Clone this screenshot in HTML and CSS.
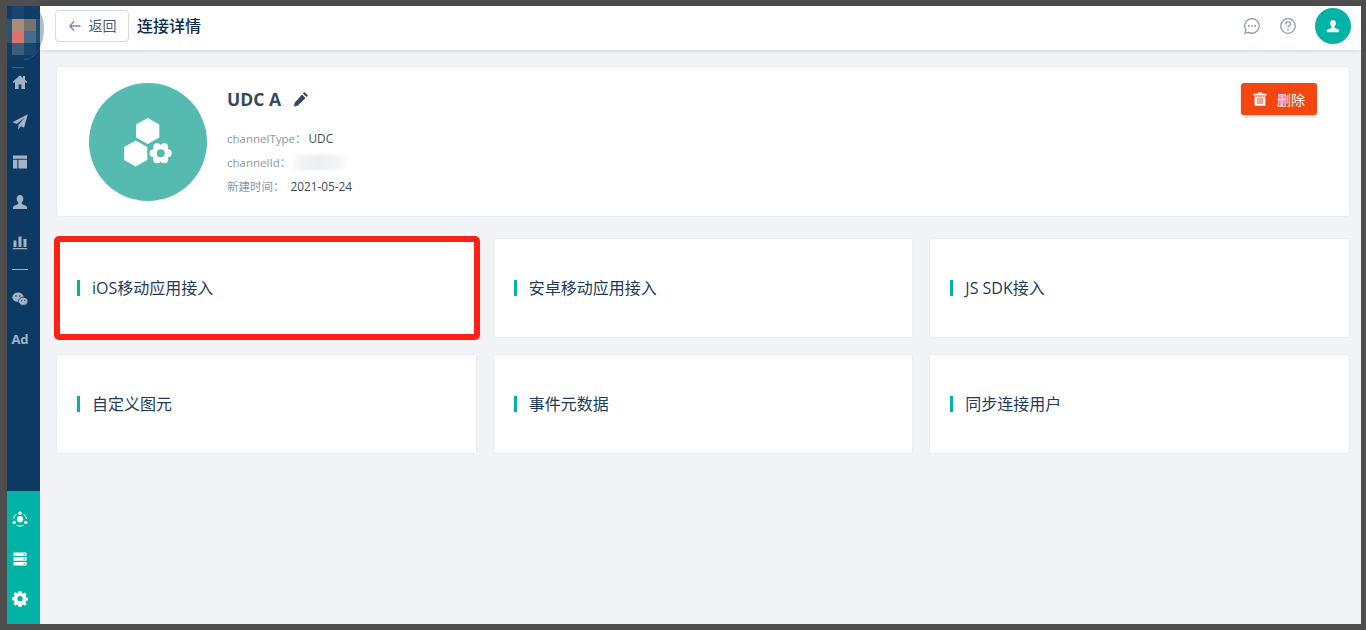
FILE: index.html
```html
<!DOCTYPE html>
<html lang="zh">
<head>
<meta charset="utf-8">
<title>连接详情</title>
<link rel="stylesheet" href="styles.css">
</head>
<body>
<div class="app">
  <aside class="sidebar">
    <div class="side-top">
      <div class="logo">
        <div class="mosaic">
          <i class="c1"></i><i class="c2"></i><i class="c1"></i><i class="c1"></i>
          <i class="c3"></i><i class="c4"></i><i class="c5"></i><i class="c6"></i>
          <i class="c3"></i><i class="c7"></i><i class="c8"></i><i class="c6"></i>
          <i class="c1"></i><i class="c9"></i><i class="c2"></i><i class="c1"></i>
        </div>
      </div>
      <div class="rule rule-top"></div>
      <nav class="nav">
        <a class="nav-item first"><svg viewBox="0 0 16 16" class="ico"><path d="M8 1.200 0.600 8l1 1L3 7.800V15h3.600v-4.400h2.800V15H13V7.800l1.400 1.200 1-1L13 5.800V2h-2v1.900z"/></svg></a>
        <a class="nav-item"><svg viewBox="0 0 16 16" class="ico"><path d="M15.800.3.400 8.200l4.200 1.800L13 3.400 6.300 11.100v4.300l2.500-3.100 3.300 1.400z"/></svg></a>
        <a class="nav-item"><svg viewBox="0 0 16 16" class="ico"><path d="M1 1.500h14v3.200H1zM1 5.800h4.300v8.700H1zM6.400 5.800H15v8.700H6.400z"/></svg></a>
        <a class="nav-item"><svg viewBox="0 0 16 16" class="ico"><path d="M8 1c2 0 3.300 1.500 3.300 3.700 0 1.700-.8 3-1.600 3.700v1.200c0 .6 1.200 1 2.500 1.500 1.500.6 2.800 1.100 2.800 2.300V15H1v-1.600c0-1.200 1.300-1.700 2.800-2.300 1.300-.5 2.500-.9 2.500-1.500V8.400c-.8-.7-1.600-2-1.600-3.700C4.700 2.500 6 1 8 1z"/></svg></a>
        <a class="nav-item"><svg viewBox="0 0 16 16" class="ico"><path d="M1.500 6.500h3v6.500h-3zM6.500 2.500h3V13h-3zM11.500 5h3v8h-3zM.8 14h14.400v1.200H.8z"/></svg></a>
        <div class="rule rule-mid"></div>
        <a class="nav-item"><svg viewBox="0 0 16 16" class="ico"><ellipse cx="6" cy="6.200" rx="5.700" ry="4.700"/><ellipse cx="11.200" cy="10.300" rx="4.800" ry="4" stroke="#0d3a63" stroke-width=".8"/><circle cx="4" cy="5" r=".8" fill="#0d3a63"/><circle cx="7.800" cy="5" r=".8" fill="#0d3a63"/><circle cx="9.600" cy="9.600" r=".6" fill="#0d3a63"/><circle cx="12.800" cy="9.600" r=".6" fill="#0d3a63"/></svg></a>
        <a class="nav-item ad">Ad</a>
      </nav>
    </div>
    <div class="side-bottom">
      <a class="nav-item"><svg viewBox="0 0 16 16" class="ico white"><circle cx="8" cy="8.200" r="3.100"/><circle cx="8" cy="2.200" r="1.700"/><circle cx="2.200" cy="11.400" r="1.700"/><circle cx="13.800" cy="11.400" r="1.700"/><path d="M4.400 3.200A6.600 6.600 0 0 0 1.500 8M11.600 3.200A6.600 6.600 0 0 1 14.500 8M4.500 14.200a6.800 6.800 0 0 0 7 0" fill="none" stroke="#fff" stroke-width="1"/></svg></a>
      <a class="nav-item"><svg viewBox="0 0 16 16" class="ico white"><path d="M1.500 1.500h13v3.600h-13zM1.500 6.200h13v3.600h-13zM1.500 10.900h13v3.600h-13z"/><circle cx="12.200" cy="3.300" r=".8" fill="#00b3a4"/><circle cx="12.200" cy="8" r=".8" fill="#00b3a4"/><circle cx="12.200" cy="12.700" r=".8" fill="#00b3a4"/></svg></a>
      <a class="nav-item"><svg viewBox="0 0 16 16" class="ico white"><path fill-rule="evenodd" d="M6.600.5h2.800l.4 2.100 1.300.6 1.800-1.200 2 2-1.200 1.800.6 1.300 2.100.4v2.800l-2.100.4-.6 1.300 1.200 1.800-2 2-1.800-1.200-1.300.6-.4 2.100H6.600l-.4-2.100-1.300-.6-1.800 1.200-2-2 1.200-1.800-.6-1.300L-.4 9.800V7l2.100-.4.600-1.300L1.100 3.500l2-2 1.800 1.200 1.300-.6zM8 5.600a2.800 2.800 0 1 0 0 5.600 2.800 2.800 0 0 0 0-5.600z" transform="translate(.4 -.4) scale(.96)"/></svg></a>
    </div>
  </aside>
  <div class="main">
    <header class="topbar">
      <button class="back"><svg viewBox="0 0 14 14" class="back-ico"><path d="M6 2.500 1.800 7 6 11.500M2 7h10.500" fill="none" stroke="#7b8a9e" stroke-width="1.300"/></svg><span class="back-text">返回</span></button>
      <h1 class="page-title">连接详情</h1>
      <div class="top-actions">
        <svg viewBox="0 0 18 18" class="top-ico"><path d="M9 1.600a7.300 7.300 0 1 1-3.400 13.800L2 16.400l1-3.400A7.300 7.300 0 0 1 9 1.600z" fill="none" stroke="#8d9bb0" stroke-width="1.300"/><circle cx="5.800" cy="9" r="1" fill="#8d9bb0"/><circle cx="9" cy="9" r="1" fill="#8d9bb0"/><circle cx="12.200" cy="9" r="1" fill="#8d9bb0"/></svg>
        <svg viewBox="0 0 18 18" class="top-ico"><circle cx="9" cy="9" r="7.300" fill="none" stroke="#8d9bb0" stroke-width="1.300"/><path d="M6.700 7.200c0-1.400 1-2.300 2.300-2.300s2.300.9 2.300 2.100c0 1.700-2.300 1.800-2.300 3.500" fill="none" stroke="#8d9bb0" stroke-width="1.300"/><circle cx="9" cy="12.700" r=".9" fill="#8d9bb0"/></svg>
        <div class="avatar"><svg viewBox="0 0 16 16" class="avatar-ico"><path d="M8 1c2 0 3.300 1.500 3.300 3.700 0 1.700-.8 3-1.600 3.700v1.200c0 .6 1.200 1 2.500 1.500 1.500.6 2.800 1.100 2.800 2.300V15H1v-1.600c0-1.200 1.300-1.700 2.800-2.300 1.300-.5 2.500-.9 2.500-1.500V8.400c-.8-.7-1.600-2-1.600-3.700C4.700 2.500 6 1 8 1z" fill="#fff"/></svg></div>
      </div>
    </header>
    <main class="content">
      <section class="info-card">
        <div class="hero"><svg viewBox="0 0 118 118" class="hero-ico"><path d="M58.700 35 70.300 41.500v13L58.700 61 47.100 54.500v-13z" fill="#fff"/><path d="M46.700 57.500 58.300 64v13L46.700 83.500 35.100 77V64z" fill="#fff"/><g fill="#fff"><circle cx="71.700" cy="70.300" r="8"/><circle cx="78.700" cy="70.300" r="4"/><circle cx="64.700" cy="70.300" r="4"/><circle cx="75.200" cy="64.300" r="4"/><circle cx="68.200" cy="64.300" r="4"/><circle cx="75.200" cy="76.300" r="4"/><circle cx="68.200" cy="76.300" r="4"/></g><circle cx="71.700" cy="70.300" r="4" fill="#55bbb1"/></svg></div>
        <div class="info">
          <div class="name-row"><span class="name">UDC A</span><svg viewBox="0 0 16 16" class="edit"><path d="M11.500 1 15 4.500l-1.600 1.600L9.900 2.600zM9 3.500 12.500 7l-7.800 7.800-3.700.7.700-3.700z" fill="#34495e"/></svg></div>
          <div class="meta"><span class="label tight">channelType：</span><span class="val">UDC</span></div>
          <div class="meta"><span class="label">channelId：</span><span class="smudge"></span></div>
          <div class="meta"><span class="label">新建时间：</span><span class="val">2021-05-24</span></div>
        </div>
        <button class="del"><svg viewBox="0 0 14 14" class="del-ico"><path fill="#fff" fill-rule="evenodd" d="M5 .4h4l.6 1.300H13.500v1.900H.5V1.700h3.900zM1.600 4.500h10.800V13.800H1.600zM4.200 6.200v5.800h5.600V6.200z"/><path fill="#f9a78c" d="M4.200 6.200h5.600v5.800H4.200z"/></svg><span>删除</span></button>
      </section>
      <section class="grid">
        <a class="tile marked"><span class="tile-label">iOS移动应用接入</span></a>
        <a class="tile"><span class="tile-label">安卓移动应用接入</span></a>
        <a class="tile"><span class="tile-label">JS SDK接入</span></a>
        <a class="tile"><span class="tile-label">自定义图元</span></a>
        <a class="tile"><span class="tile-label">事件元数据</span></a>
        <a class="tile"><span class="tile-label">同步连接用户</span></a>
      </section>
    </main>
  </div>
</div>
</body>
</html>
```
FILE: styles.css
```css
* { box-sizing: border-box; }
html, body { margin: 0; height: 100%; overflow: hidden; }
body {
  font-family: "Open Sans", "Noto Sans CJK SC", sans-serif;
  background: #4d4d4d;
}
a { display: block; }
.app {
  display: flex;
  height: 630px;
  padding: 6px 5px 6px 7px;
  background: #4d4d4d;
}
.sidebar {
  position: relative;
  z-index: 3;
  flex: 0 0 33px;
  display: flex;
  flex-direction: column;
  justify-content: space-between;
  background: #0d3a63;
}
.logo {
  position: absolute;
  top: 0;
  left: 0;
  width: 37px;
  height: 54px;
  border-radius: 0 14px 22px 0 / 0 24px 34px 0;
  overflow: hidden;
  background: #aebccb;
}
.mosaic {
  width: 33px;
  height: 100%;
  display: grid;
  grid-template-columns: 5px 12px 12px 4px;
  grid-template-rows: 13px 12px 12px 12px;
  border-radius: 0 0 12px 0;
  overflow: hidden;
  background: #0f3d66;
}
.mosaic i { display: block; }
.c1 { background: #0f3d66; }
.c2 { background: #18466f; }
.c3 { background: #24587b; }
.c4 { background: #b08a78; }
.c5 { background: #77726f; }
.c6 { background: #1f4f73; }
.c7 { background: #dc7270; }
.c8 { background: #436d8a; }
.c9 { background: #3d5d7a; }
.rule { height: 1px; }
.rule-top { margin: 61px 16px 0 5px; background: #3a5f82; }
.rule-mid { margin: 7px 12px 9px 5px; background: #9fb0c2; }
.nav-item {
  display: flex;
  align-items: center;
  justify-content: center;
  height: 40px;
  padding-right: 7px;
}
.nav-item.first { margin-top: -6px; }
.ico { width: 16px; height: 16px; fill: #a3b3c4; }
.ico.white { fill: #fff; }
.ad { font-size: 13px; font-weight: 700; color: #a3b3c4; font-family: "Open Sans", sans-serif; }
.side-bottom {
  background: #00b3a4;
  height: 133px;
  padding-top: 8px;
}
.main {
  flex: 1;
  min-width: 0;
  display: flex;
  flex-direction: column;
  background: #f1f3f7;
}
.topbar {
  flex: 0 0 44px;
  display: flex;
  align-items: center;
  padding: 0 10px 4px 15px;
  background: #fff;
  box-shadow: 0 1px 4px rgba(30, 50, 80, .15);
  position: relative;
  z-index: 1;
}
.back {
  display: flex;
  align-items: center;
  justify-content: center;
  gap: 7px;
  width: 74px;
  height: 32px;
  padding: 0;
  background: #fff;
  border: 1px solid #d5dbe3;
  border-radius: 4px;
  color: #4a5b70;
  font: 14px "Open Sans", "Noto Sans CJK SC", sans-serif;
}
.back-text { padding-bottom: 2px; }
.back-ico { width: 14px; height: 14px; }
.page-title {
  margin: 0 0 0 8px;
  padding-bottom: 2px;
  font-size: 16px;
  font-weight: 500;
  color: #0d2b4e;
}
.top-actions { margin-left: auto; display: flex; align-items: center; }
.top-ico { width: 18px; height: 18px; margin-right: 18px; }
.avatar {
  width: 36px;
  height: 36px;
  border-radius: 50%;
  background: #00b3a4;
  display: flex;
  align-items: center;
  justify-content: center;
}
.avatar-ico { width: 14px; height: 14px; }
.content { padding: 16px 11px 0 16px; }
.info-card {
  height: 151px;
  padding: 16px 32px;
  display: flex;
  align-items: flex-start;
  background: #fff;
  border: 1px solid #e9ecf1;
  border-radius: 3px;
}
.hero {
  flex: 0 0 118px;
  height: 118px;
  border-radius: 50%;
  background: #55bbb1;
}
.hero-ico { width: 118px; height: 118px; display: block; }
.info { margin-left: 20px; }
.name-row { display: flex; align-items: center; height: 32px; }
.name { font-size: 17.5px; font-weight: 700; color: #34495e; }
.edit { width: 16px; height: 16px; margin-left: 12px; }
.meta {
  display: flex;
  align-items: center;
  height: 24px;
  font-size: 11.5px;
  color: #8a97a8;
}
.name-row + .meta { margin-top: 11px; }
.label { margin-right: 6px; }
.label.tight { margin-right: 2px; }
.val { color: #3b4c60; font-size: 11.8px; }
.smudge {
  width: 56px;
  height: 15px;
  margin-left: -4px;
  border-radius: 4px;
  background: linear-gradient(90deg, #fafafb, #f0f1f3 20%, #eceef1 45%, #f2f3f5 75%, #fff);
  filter: blur(1.5px);
}
.del {
  margin-left: auto;
  width: 76px;
  height: 32px;
  display: flex;
  align-items: center;
  justify-content: center;
  gap: 10px;
  padding: 0;
  background: #f34610;
  border: 0;
  border-radius: 3px;
  color: #fff;
  font: 14px "Open Sans", "Noto Sans CJK SC", sans-serif;
  box-shadow: 0 1px 2px rgba(243, 70, 16, .4);
}
.del-ico { width: 14px; height: 14px; }
.grid {
  margin-top: 21px;
  display: grid;
  grid-template-columns: repeat(3, 1fr);
  grid-auto-rows: 100px;
  gap: 16px;
}
.tile {
  position: relative;
  display: flex;
  align-items: center;
  padding-left: 20px;
  background: #fff;
  border: 1px solid #e9ecf1;
  border-radius: 2px;
}
.tile-label {
  padding-left: 12px;
  border-left: 3px solid #00b3a4;
  font-size: 16px;
  line-height: 16px;
  color: #1f3a5a;
}
.marked::after {
  content: "";
  position: absolute;
  top: -3px;
  left: -3px;
  right: -4px;
  bottom: -3px;
  border: 6px solid #ff2015;
  border-radius: 5px;
}
```
